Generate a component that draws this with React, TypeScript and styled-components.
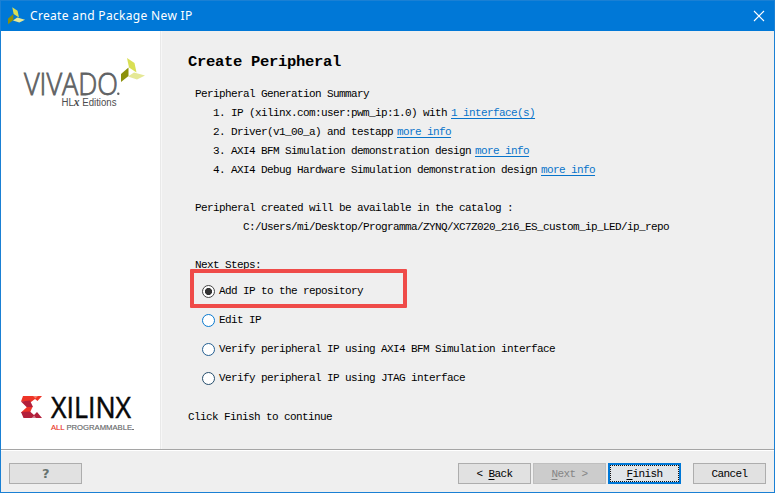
import React from "react";
import styled, { createGlobalStyle } from "styled-components";

const GlobalStyle = createGlobalStyle`
  * { box-sizing: border-box; }
  body { margin: 0; overflow: hidden; }
`;

const Window = styled.div`
  width: 775px;
  height: 493px;
  display: flex;
  flex-direction: column;
  border: 1px solid #1a80d4;
  background: #efefef;
  color: #000;
  font: 11px/19px "Liberation Mono", monospace;
  letter-spacing: -0.601px;
  white-space: pre;
`;

const TitleBar = styled.header`
  height: 30px;
  flex: none;
  display: flex;
  align-items: center;
  padding: 0 9px 0 7px;
  background: #0078d7;
  color: #fff;
`;

const Title = styled.h1`
  margin: 0 0 0 5px;
  flex: 1;
  font: 400 12px/30px "Noto Sans", sans-serif;
  letter-spacing: 0.33px;
`;

const CloseButton = styled.button`
  display: flex;
  padding: 0;
  border: 0;
  background: none;
`;

const Body = styled.div`
  display: flex;
  height: 418px;
  flex: none;
`;

const Sidebar = styled.aside`
  width: 160px;
  display: flex;
  flex-direction: column;
  justify-content: space-between;
  background: #fff;
  border-right: 1px solid #e9e9e9;
  padding: 25px 0 13px 14px;
`;

const Main = styled.main`
  flex: 1;
  padding: 21px 0 0 26px;
  border-left: 1px solid #f7f7f7;
`;

const Heading = styled.h2`
  margin: 0 0 13px;
  font-size: 15.5px;
  line-height: 20px;
  letter-spacing: -0.302px;
`;

const Section = styled.section<{ $gap: number }>`
  margin: 0 0 ${(p) => p.$gap}px 7px;
`;

const Steps = styled.div`
  position: relative;
  margin-left: 7px;
`;

const Line = styled.div<{ $indent?: number }>`
  height: 19px;
  padding-left: ${(p) => p.$indent ?? 0}px;
`;

const Link = styled.a`
  margin-left: 4px;
  color: #0874ca;
  text-decoration: underline;
  text-underline-offset: 2px;
  text-decoration-thickness: 1px;
  text-decoration-skip-ink: none;
`;

const Options = styled.div`
  display: flex;
  flex-direction: column;
  gap: 10px;
  padding: 7px 0 0 7px;
`;

const Option = styled.label`
  display: flex;
  align-items: center;
  height: 19px;
  gap: 4px;
`;

const Radio = styled.input<{ $color: string }>`
  appearance: none;
  flex: none;
  width: 13px;
  height: 13px;
  margin: 0 0 1px;
  border: 1px solid ${(p) => p.$color};
  border-radius: 50%;
  background: #fff;

  &:checked {
    background: radial-gradient(circle, #333 0 3.2px, #fff 3.9px);
  }
`;

const Highlight = styled.div`
  position: absolute;
  left: -5px;
  top: 13px;
  width: 217px;
  height: 39px;
  border: 4px solid #ef4b49;
  border-radius: 1px;
`;

const Hint = styled.p`
  margin: 20px 0 0;
`;

const Footer = styled.footer`
  flex: 1;
  display: flex;
  align-items: flex-start;
  justify-content: space-between;
  border-top: 1px solid #a5a5a5;
  box-shadow: inset 0 1px #fff;
  padding: 13px 8px 0;
`;

const Buttons = styled.div`
  display: flex;
  gap: 2px;
`;

const Button = styled.button<{ $apart?: boolean; $primary?: boolean }>`
  width: 73px;
  height: 21px;
  margin-left: ${(p) => (p.$apart ? 10 : 0)}px;
  padding: ${(p) => (p.$primary ? "1px 0 0" : "2px 0 0")};
  border: ${(p) => (p.$primary ? "2px solid #0078d7" : "1px solid #adadad")};
  outline: ${(p) => (p.$primary ? "1px dotted #111" : "none")};
  outline-offset: -3px;
  background: ${(p) => (p.$primary ? "#e0e5e9" : "#e1e1e1")};
  color: #000;
  font: inherit;
  line-height: 17px;
  letter-spacing: inherit;
  white-space: pre;

  &:disabled {
    background: #ccc;
    border-color: #bfbfbf;
    color: #858585;
  }
`;

const HelpButton = styled(Button)`
  padding: 0;
  color: #67736f;
  font: 700 13px/17px "DejaVu Sans", sans-serif;
`;

const Mnemonic = styled.u`
  text-underline-offset: 2px;
  text-decoration-thickness: 1px;
`;

const Logo = styled.svg`
  display: block;
  overflow: visible;
`;

const VivadoMark = () => (
  <g>
    <path d="M6 0 13.5 5 15.5 14.5 8 9.5Z" fill="#d9df54" />
    <path d="M7.5 9.5V18L0 24V16Z" fill="#8c900b" />
    <path d="M7 18.5 13 14.5 24 17.5 16 21.5Z" fill="#e5e896" />
  </g>
);

const TitleIcon = () => (
  <Logo width="17" height="17" viewBox="0 1 24 24">
    <VivadoMark />
  </Logo>
);

const VivadoLogo = () => (
  <Logo width="140" height="54" viewBox="15 56 140 54">
    <text x="24" y="95" fontFamily="Open Sans" fontSize="30.5" fontWeight="300" letterSpacing="0" textLength="94" lengthAdjust="spacingAndGlyphs" fill="#606264" stroke="#606264" strokeWidth=".8">VIVADO</text>
    <circle cx="118.3" cy="93.7" r="1.2" fill="#606264" />
    <text x="61.5" y="106" fontFamily="Liberation Sans" fontSize="10" letterSpacing="0" textLength="55" lengthAdjust="spacingAndGlyphs" fill="#4c4c4e">
      HL<tspan fontFamily="Liberation Serif" fontStyle="italic" fontWeight="700" fontSize="12">x</tspan> Editions
    </text>
    <g transform="translate(121 58)">
      <VivadoMark />
    </g>
  </Logo>
);

const XilinxLogo = () => (
  <Logo width="140" height="43" viewBox="15 393 140 43">
    <path d="M23 396H42L37.5 401 35 399 31 402 21 401.5Z" fill="#ee3427" />
    <path d="M33 395.9 35.5 398.6 38 395.9Z" fill="#f6806f" />
    <path d="M21 401.5 30 400.5 33 407 27 407.5Z" fill="#b3203b" />
    <path d="M27 407H32.5L30 412.5H21Z" fill="#ee3427" />
    <path d="M21 412 30 411.5 34 415 37 412 42 418H23.5Z" fill="#b3203b" />
    <path d="M31.5 418 34.3 415.5 36 418Z" fill="#d78391" />
    <text x="51" y="417.7" fontFamily="Open Sans" fontSize="30" letterSpacing="0" textLength="80" lengthAdjust="spacingAndGlyphs" fill="#080808" stroke="#080808" strokeWidth=".5">XILINX</text>
    <text x="51" y="430" fontFamily="Liberation Sans" fontSize="7.6" letterSpacing="0" textLength="81" lengthAdjust="spacingAndGlyphs" fill="#66676a" stroke="#66676a" strokeWidth=".15">
      <tspan fill="#ea3528" stroke="#ea3528">ALL</tspan> PROGRAMMABLE
    </text>
    <path d="M132 429.5h2" stroke="#777" />
  </Logo>
);

const summary = [
  ["1. IP (xilinx.com:user:pwm_ip:1.0) with", "1 interface(s)"],
  ["2. Driver(v1_00_a) and testapp", "more info"],
  ["3. AXI4 BFM Simulation demonstration design", "more info"],
  ["4. AXI4 Debug Hardware Simulation demonstration design", "more info"],
];

const options = [
  ["Add IP to the repository", "#444"],
  ["Edit IP", "#0879cf"],
  ["Verify peripheral IP using AXI4 BFM Simulation interface", "#245f91"],
  ["Verify peripheral IP using JTAG interface", "#254d6c"],
];

export default function App() {
  return (
    <>
      <GlobalStyle />
      <Window>
        <TitleBar>
          <TitleIcon />
          <Title>Create and Package New IP</Title>
          <CloseButton aria-label="Close">
            <svg width="12" height="12" viewBox="0 0 12 12">
              <path d="M1 1 11 11M11 1 1 11" stroke="#fff" strokeWidth="1.1" />
            </svg>
          </CloseButton>
        </TitleBar>
        <Body>
          <Sidebar>
            <VivadoLogo />
            <XilinxLogo />
          </Sidebar>
          <Main>
            <Heading>Create Peripheral</Heading>
            <Section $gap={19}>
              <Line>Peripheral Generation Summary</Line>
              {summary.map(([text, link]) => (
                <Line key={text} $indent={18}>
                  {text}
                  <Link>{link}</Link>
                </Line>
              ))}
            </Section>
            <Section $gap={19}>
              <Line>Peripheral created will be available in the catalog :</Line>
              <Line $indent={48}>C:/Users/mi/Desktop/Programma/ZYNQ/XC7Z020_216_ES_custom_ip_LED/ip_repo</Line>
            </Section>
            <Steps>
              <Line>Next Steps:</Line>
              <Options>
                {options.map(([text, color], i) => (
                  <Option key={text}>
                    <Radio type="radio" name="next" defaultChecked={i === 0} $color={color} />
                    {text}
                  </Option>
                ))}
              </Options>
              <Highlight />
            </Steps>
            <Hint>Click Finish to continue</Hint>
          </Main>
        </Body>
        <Footer>
          <HelpButton>?</HelpButton>
          <Buttons>
            <Button>{"< "}<Mnemonic>B</Mnemonic>ack</Button>
            <Button disabled><Mnemonic>N</Mnemonic>{"ext >"}</Button>
            <Button $primary><Mnemonic>F</Mnemonic>inish</Button>
            <Button $apart>Cancel</Button>
          </Buttons>
        </Footer>
      </Window>
    </>
  );
}
